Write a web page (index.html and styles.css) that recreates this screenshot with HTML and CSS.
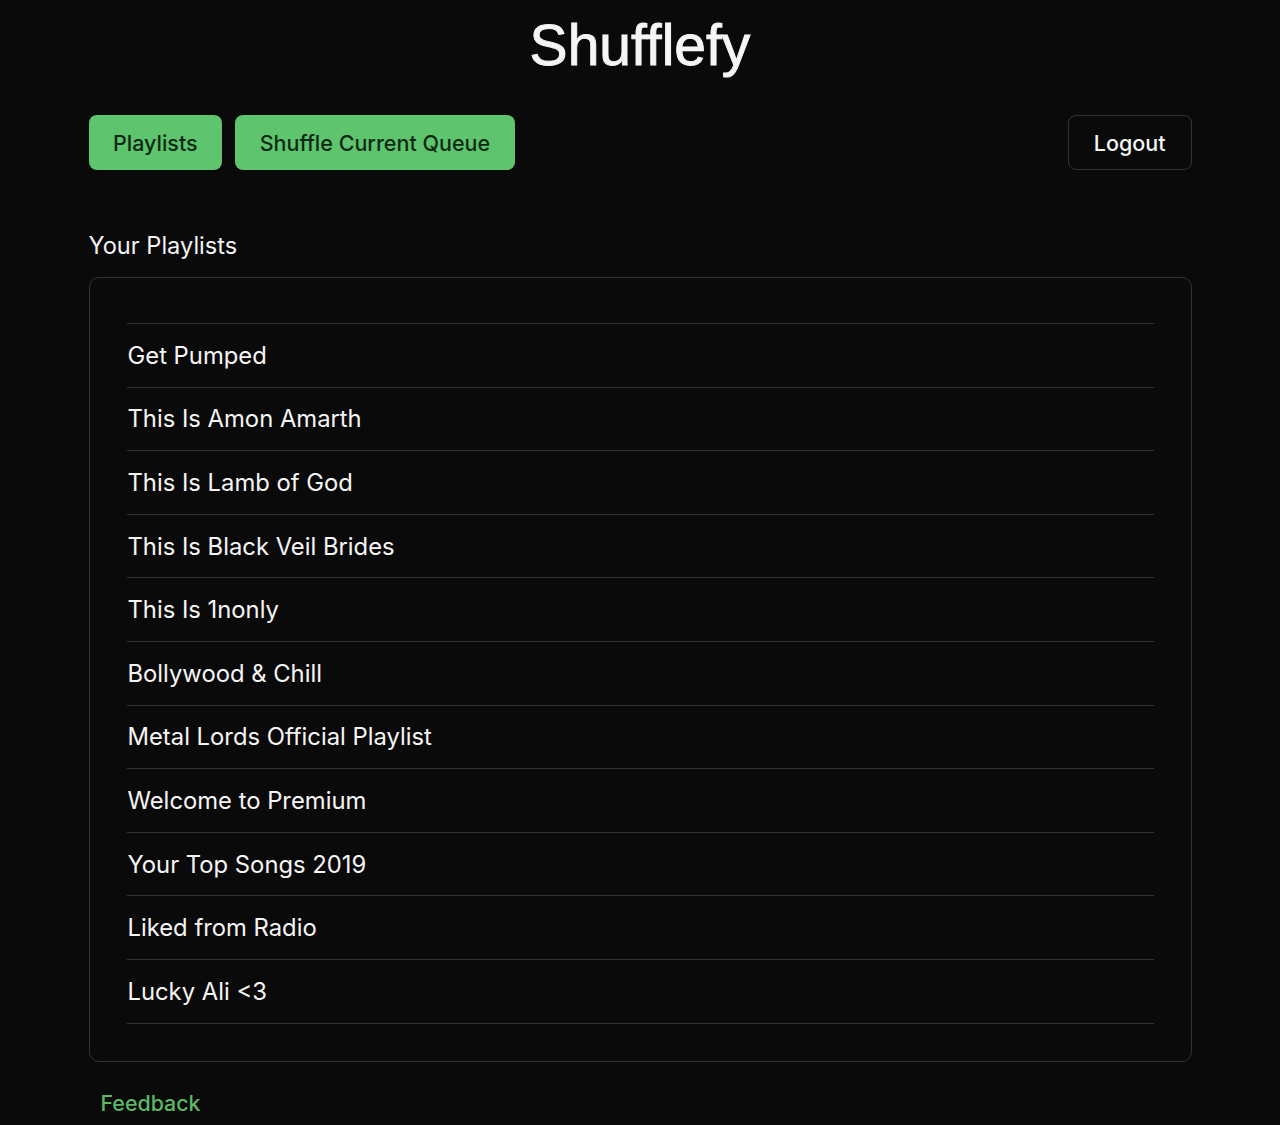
FILE: index.html
```html
<!DOCTYPE html>
<html lang="en">
<head>
<meta charset="utf-8">
<title>Shufflefy</title>
<link rel="stylesheet" href="styles.css">
</head>
<body>
<div class="app">
  <h1 class="title">Shufflefy</h1>
  <nav class="nav">
    <button class="btn btn-green">Playlists</button>
    <button class="btn btn-green">Shuffle Current Queue</button>
    <button class="btn btn-outline">Logout</button>
  </nav>
  <h2 class="section-title">Your Playlists</h2>
  <div class="card">
    <ul class="list">
      <li>Get Pumped</li>
      <li>This Is Amon Amarth</li>
      <li>This Is Lamb of God</li>
      <li>This Is Black Veil Brides</li>
      <li>This Is 1nonly</li>
      <li>Bollywood &amp; Chill</li>
      <li>Metal Lords Official Playlist</li>
      <li>Welcome to Premium</li>
      <li>Your Top Songs 2019</li>
      <li>Liked from Radio</li>
      <li>Lucky Ali &lt;3</li>
    </ul>
  </div>
  <a class="feedback" href="#">Feedback</a>
</div>
</body>
</html>
```

FILE: styles.css
```css
html, body {
  margin: 0;
  padding: 0;
  background: #0b0a0a;
  color: #f2f2f2;
  font-family: Inter, "Noto Sans", sans-serif;
}

.app {
  max-width: 1103px;
  margin: 0 auto;
}

.title {
  margin: 0;
  height: 90px;
  line-height: 90px;
  text-align: center;
  font-family: "Liberation Sans", Arial, sans-serif;
  font-size: 57px;
  font-weight: 400;
  font-variant-ligatures: none;
  -webkit-text-stroke: 0.9px #f5f5f5;
  color: #f5f5f5;
}

.nav {
  display: flex;
  gap: 13px;
  margin-top: 25px;
}

.btn {
  height: 55px;
  padding: 0 24.5px;
  border-radius: 8px;
  font-family: Inter, "Noto Sans", sans-serif;
  font-size: 21.5px;
  font-weight: 500;
  cursor: pointer;
}

.btn-green {
  background: #5ec46e;
  border: none;
  color: #0f2a14;
}

.btn-outline {
  margin-left: auto;
  background: transparent;
  border: 1px solid #333;
  color: #f5f5f5;
  padding: 0 25px;
}

.section-title {
  margin: 62px 0 17px;
  font-size: 23.6px;
  line-height: 28px;
  font-weight: 400;
  color: #f2f2f2;
}

.card {
  border: 1px solid #333;
  border-radius: 10px;
  padding: 45px 37px 37px;
}

.list {
  list-style: none;
  margin: 0;
  padding: 0;
  border-top: 1px solid #333;
}

.list li {
  font-size: 23.8px;
  line-height: 30px;
  padding: 16.8px 0 15.8px 1px;
  border-bottom: 1px solid #333;
  color: #f5f5f5;
}

.feedback {
  display: inline-block;
  margin: 27px 0 0 12px;
  font-size: 21.4px;
  line-height: 28px;
  font-weight: 500;
  color: #5cb865;
  text-decoration: none;
}
```
